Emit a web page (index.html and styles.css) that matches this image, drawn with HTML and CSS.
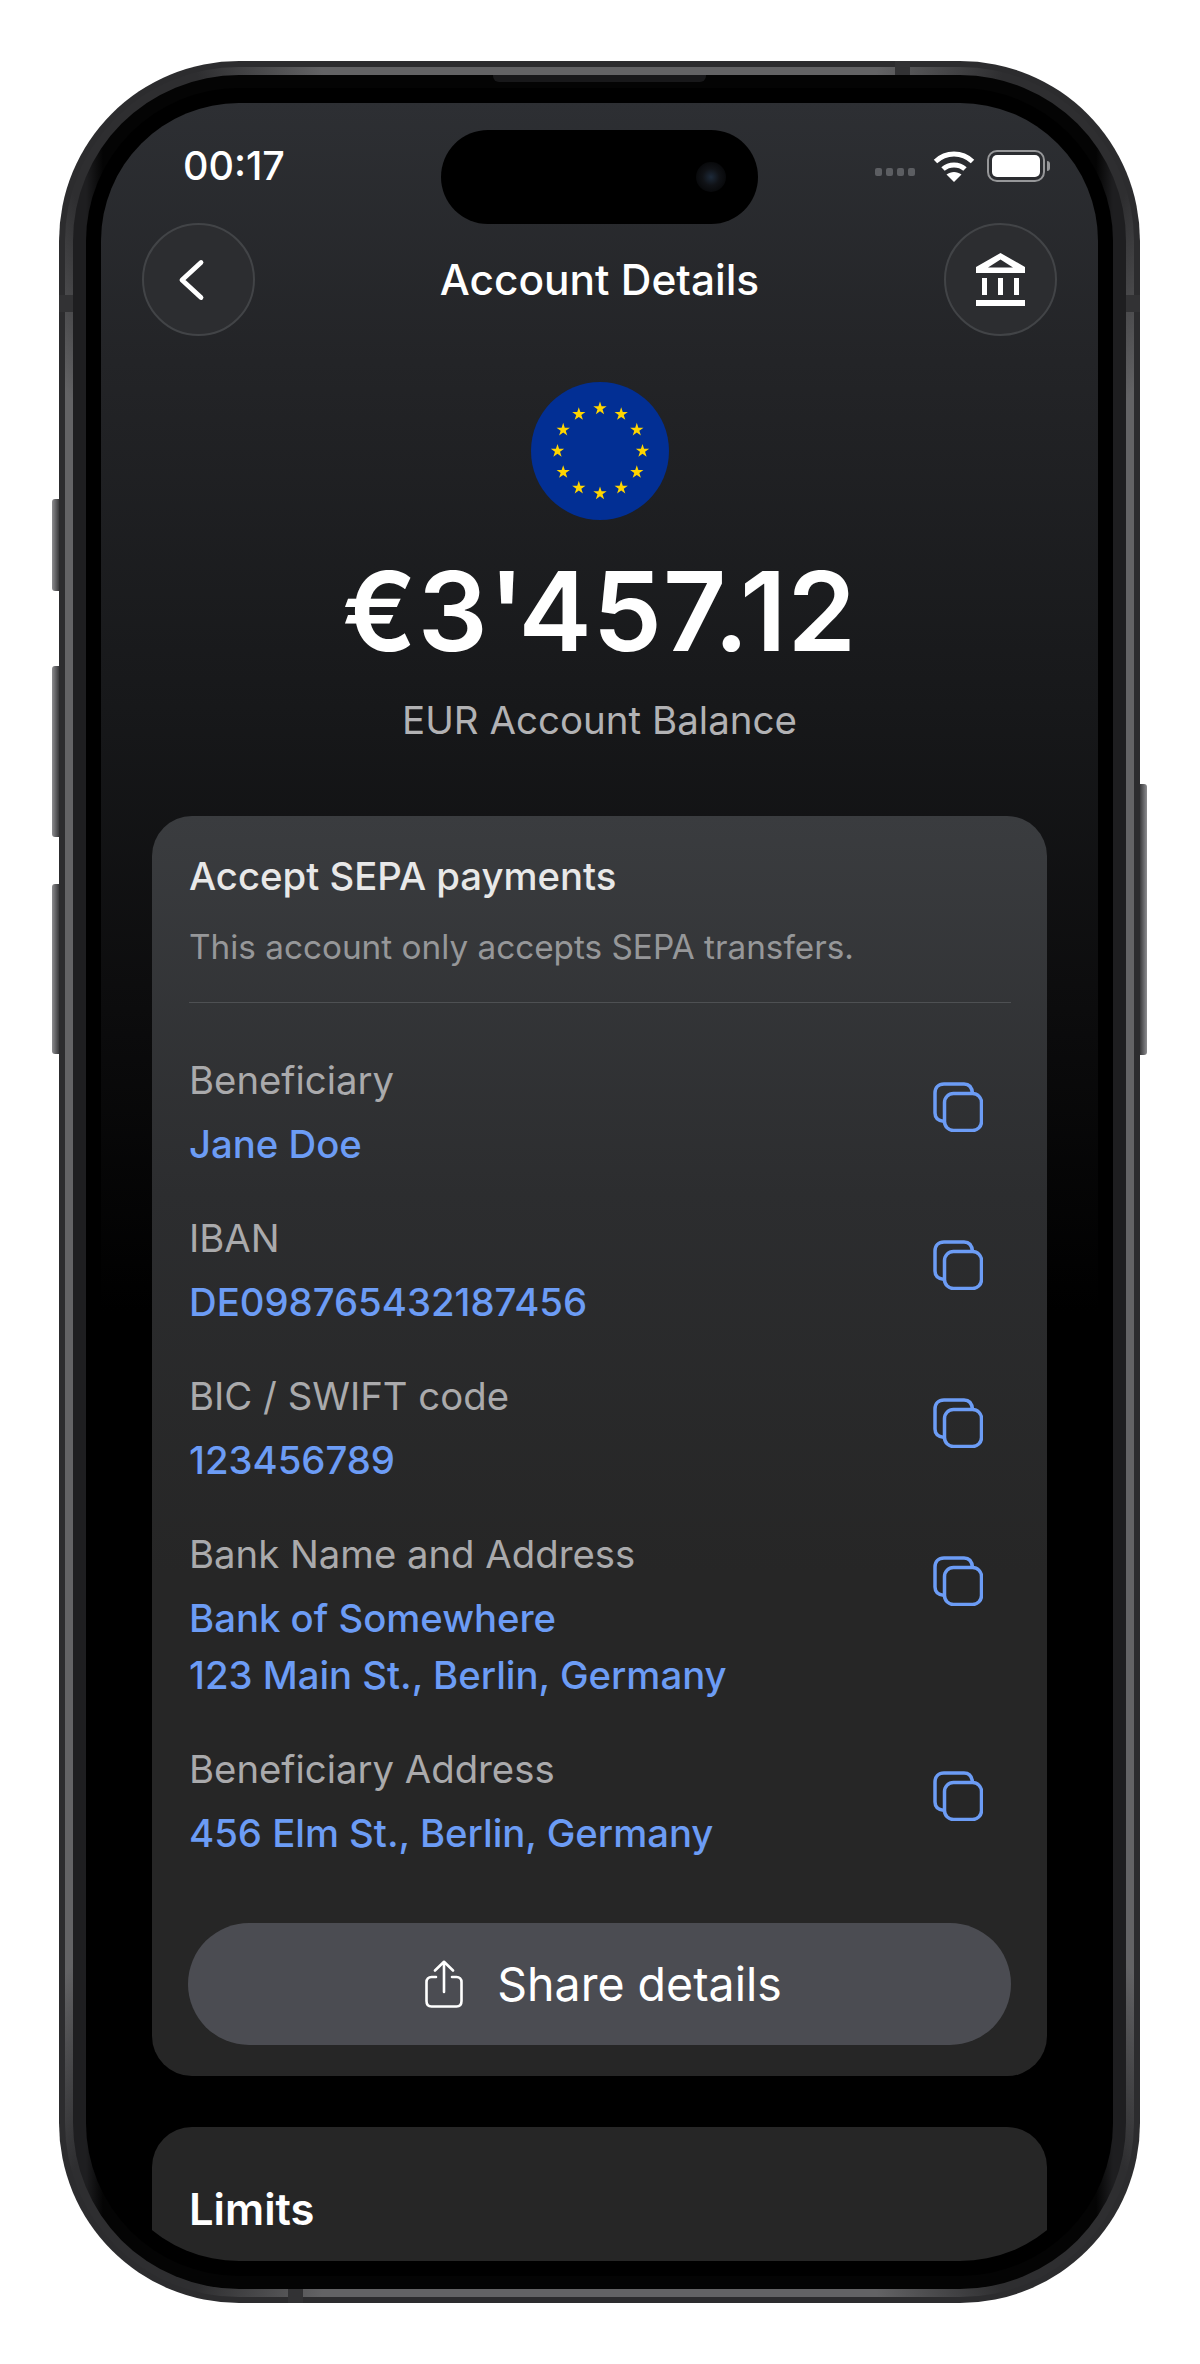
FILE: index.html
```html
<!DOCTYPE html>
<html lang="en">
<head>
    <meta charset="UTF-8">
    <title>Account Details</title>
    <link rel="stylesheet" href="styles.css">
</head>
<body>

<div class="device">
    <span class="side-btn btn-action"></span>
    <span class="side-btn btn-up"></span>
    <span class="side-btn btn-down"></span>
    <span class="side-btn btn-power"></span>

    <div class="rim">
        <div class="bezel">
            <span class="speaker"></span>
            <div class="black-edge">
                <div class="screen">
                    <div class="island">
                        <span class="lens"></span>
                    </div>

                    <div class="status">
                        <span class="time">00:17</span>
                        <div class="status-icons">
                            <div class="signal"><i></i><i></i><i></i><i></i></div>
                            <svg class="wifi" width="42" height="34" viewBox="0 0 42 34">
                                <path d="M2.500 12.500C13 2.500 29 2.500 39.500 12.500" fill="none" stroke="#fff" stroke-width="5"/>
                                <path d="M10 20C16 14.500 26 14.500 32 20" fill="none" stroke="#fff" stroke-width="5"/>
                                <path d="M21 33 13.500 25.500C18 22 24 22 28.500 25.500Z" fill="#fff"/>
                            </svg>
                            <div class="battery">
                                <div class="battery-body"><div class="battery-fill"></div></div>
                                <span class="battery-nub"></span>
                            </div>
                        </div>
                    </div>

                    <div class="nav">
                        <div class="round-btn">
                            <svg class="back-icon" width="28" height="42" viewBox="0 0 28 42">
                                <path d="M24 3.500 5 21 24 38.500" fill="none" stroke="#fff" stroke-width="4.800" stroke-linecap="round" stroke-linejoin="round"/>
                            </svg>
                        </div>
                        <h1 class="nav-title">Account Details</h1>
                        <div class="round-btn">
                            <svg width="49" height="53" viewBox="0 0 49 53">
                                <path d="M24.500 0 49 14V20H0V14ZM24.500 6.500 12 14.500H37Z" fill="#fff" fill-rule="evenodd"/>
                                <rect x="6" y="25" width="5" height="17" fill="#fff"/>
                                <rect x="22" y="25" width="5" height="17" fill="#fff"/>
                                <rect x="38" y="25" width="5" height="17" fill="#fff"/>
                                <rect x="0" y="47" width="49" height="6" fill="#fff"/>
                            </svg>
                        </div>
                    </div>

                    <div class="balance">
                        <svg class="flag" width="138" height="138" viewBox="-69 -69 138 138">
                            <defs>
                                <polygon id="star" points="0,-7 1.570,-2.160 6.660,-2.160 2.540,0.830 4.110,5.660 0,2.700 -4.110,5.660 -2.540,0.830 -6.660,-2.160 -1.570,-2.160" fill="#ffd500"/>
                            </defs>
                            <circle r="69" fill="#022f94"/>
                            <use href="#star" x="0" y="-42.500"/>
                            <use href="#star" x="21.200" y="-36.800"/>
                            <use href="#star" x="36.800" y="-21.200"/>
                            <use href="#star" x="42.500" y="0"/>
                            <use href="#star" x="36.800" y="21.200"/>
                            <use href="#star" x="21.200" y="36.800"/>
                            <use href="#star" x="0" y="42.500"/>
                            <use href="#star" x="-21.200" y="36.800"/>
                            <use href="#star" x="-36.800" y="21.200"/>
                            <use href="#star" x="-42.500" y="0"/>
                            <use href="#star" x="-36.800" y="-21.200"/>
                            <use href="#star" x="-21.200" y="-36.800"/>
                        </svg>
                        <div class="amount">€3'457.12</div>
                        <div class="amount-label">EUR Account Balance</div>
                    </div>

                    <div class="card details-card">
                        <h2 class="card-title">Accept SEPA payments</h2>
                        <p class="card-sub">This account only accepts SEPA transfers.</p>
                        <div class="divider"></div>

                        <div class="rows">
                            <div class="row">
                                <div>
                                    <div class="row-label">Beneficiary</div>
                                    <div class="row-value">Jane Doe</div>
                                </div>
                                <svg class="copy" width="50" height="50" viewBox="0 0 50 50"><use href="#copy-icon"/></svg>
                            </div>
                            <div class="row">
                                <div>
                                    <div class="row-label">IBAN</div>
                                    <div class="row-value">DE098765432187456</div>
                                </div>
                                <svg class="copy" width="50" height="50" viewBox="0 0 50 50"><use href="#copy-icon"/></svg>
                            </div>
                            <div class="row">
                                <div>
                                    <div class="row-label">BIC / SWIFT code</div>
                                    <div class="row-value">123456789</div>
                                </div>
                                <svg class="copy" width="50" height="50" viewBox="0 0 50 50"><use href="#copy-icon"/></svg>
                            </div>
                            <div class="row">
                                <div>
                                    <div class="row-label">Bank Name and Address</div>
                                    <div class="row-value">Bank of Somewhere<br>123 Main St., Berlin, Germany</div>
                                </div>
                                <svg class="copy" width="50" height="50" viewBox="0 0 50 50"><use href="#copy-icon"/></svg>
                            </div>
                            <div class="row">
                                <div>
                                    <div class="row-label">Beneficiary Address</div>
                                    <div class="row-value">456 Elm St., Berlin, Germany</div>
                                </div>
                                <svg class="copy" width="50" height="50" viewBox="0 0 50 50"><use href="#copy-icon"/></svg>
                            </div>
                        </div>

                        <div class="share-btn">
                            <svg width="38" height="48" viewBox="0 0 38 48">
                                <path d="M11 17H6.500C3.500 17 1.500 19 1.500 22V41C1.500 44.500 3.500 46.500 6.500 46.500H31.500C34.500 46.500 36.500 44.500 36.500 41V22C36.500 19 34.500 17 31.500 17H27" fill="none" stroke="#fff" stroke-width="2.600" stroke-linecap="round"/>
                                <path d="M19 32V2M10 10.500 19 1.800 28 10.500" fill="none" stroke="#fff" stroke-width="2.600" stroke-linecap="round" stroke-linejoin="round"/>
                            </svg>
                            <span>Share details</span>
                        </div>
                    </div>

                    <div class="card limits-card">
                        <h2 class="limits-title">Limits</h2>
                    </div>
                </div>
            </div>
        </div>
    </div>

    <span class="band band-top"></span>
    <span class="band band-left"></span>
    <span class="band band-right"></span>
    <span class="band band-bottom"></span>
</div>

<svg class="sprites" width="0" height="0">
    <defs>
        <g id="copy-icon" fill="none" stroke="#6c9cf5" stroke-width="3.500">
            <path d="M11.500 39.500C5.500 39 2 36 2 31V11C2 5.500 5.500 2 11 2H31C36 2 39 5 39.500 11.500"/>
            <rect x="11.500" y="11.500" width="37" height="37" rx="9"/>
        </g>
    </defs>
</svg>

</body>
</html>
```

FILE: styles.css
```css
* {
    box-sizing: border-box;
}

body {
    margin: 0;
    padding: 61px 0 0 59px;
    height: 2364px;
    overflow: hidden;
    background-color: rgb(255, 255, 255);
    font-family: Inter, "Liberation Sans", sans-serif;
    color: rgb(255, 255, 255);
}

/* phone frame */
.device {
    position: relative;
    width: 1081px;
    height: 2242px;
    padding: 6px;
    border-radius: 180px;
    background-color: rgb(44, 44, 46);
}

.rim {
    height: 100%;
    padding: 8px;
    border-radius: 174px;
    background: conic-gradient(#636365 0 14deg, #2e2e30 20deg 28deg, #636365 34deg 146deg, #2e2e30 152deg 160deg, #636365 166deg 194deg, #2e2e30 200deg 208deg, #636365 214deg 326deg, #2e2e30 332deg 340deg, #636365 346deg);
}

.bezel {
    position: relative;
    height: 100%;
    padding: 13px;
    border-radius: 166px;
    background: linear-gradient(90deg, #1e1e20 0, #1e1e20 13px, #040404 30px, #040404 calc(100% - 30px), #1e1e20 calc(100% - 13px));
}

.black-edge {
    height: 100%;
    padding: 15px;
    border-radius: 153px;
    background-color: rgb(0, 0, 0);
}

.speaker {
    position: absolute;
    top: 0;
    left: 420px;
    width: 213px;
    height: 7px;
    border-radius: 0 0 6px 6px;
    background-color: rgb(24, 24, 26);
}

.side-btn {
    position: absolute;
    left: -7px;
    width: 7px;
    border-radius: 3px 0 0 3px;
    background: linear-gradient(90deg, #8d8d90, #3a3a3c);
}

.btn-action { top: 438px; height: 92px; }
.btn-up { top: 605px; height: 171px; }
.btn-down { top: 823px; height: 170px; }

.btn-power {
    top: 723px;
    left: auto;
    right: -7px;
    height: 271px;
    border-radius: 0 3px 3px 0;
    background: linear-gradient(270deg, #8d8d90, #3a3a3c);
}

.band {
    position: absolute;
    background-color: rgb(50, 50, 52);
}

.band-top { top: 0; left: 836px; width: 15px; height: 14px; }
.band-left { top: 234px; left: 0; width: 14px; height: 17px; }
.band-right { top: 234px; right: 0; width: 14px; height: 17px; }
.band-bottom { bottom: 0; left: 229px; width: 15px; height: 14px; }

/* screen */
.screen {
    position: relative;
    height: 100%;
    overflow: hidden;
    border-radius: 138px;
    background: linear-gradient(180deg, #2d2f33 0, #232427 12%, #17181a 28%, #0c0c0d 42%, #000 56%);
}

.island {
    position: absolute;
    top: 27px;
    left: 340px;
    width: 317px;
    height: 94px;
    border-radius: 47px;
    background-color: rgb(0, 0, 0);
}

.lens {
    position: absolute;
    top: 32px;
    right: 32px;
    width: 30px;
    height: 30px;
    border-radius: 50%;
    background: radial-gradient(circle, #1d2a3a 0, #101216 40%, #08090b 70%, #050506 100%);
}

.status {
    display: flex;
    justify-content: space-between;
    align-items: center;
    padding: 38px 48px 0 82px;
    height: 88px;
}

.time {
    font-size: 39.500px;
    font-weight: 500;
    line-height: 50px;
}

.status-icons {
    display: flex;
    align-items: center;
    height: 50px;
}

.signal {
    display: flex;
    gap: 4px;
    margin-top: 12px;
    margin-right: 18px;
}

.signal i {
    width: 7px;
    height: 8px;
    border-radius: 2px;
    background-color: rgb(92, 94, 98);
}

.wifi {
    margin-right: 12px;
}

.battery {
    display: flex;
    align-items: center;
}

.battery-body {
    width: 58px;
    height: 32px;
    padding: 3px;
    border: 2.500px solid rgb(150, 151, 153);
    border-radius: 10px;
}

.battery-fill {
    height: 100%;
    border-radius: 5px;
    background-color: rgb(255, 255, 255);
}

.battery-nub {
    width: 3px;
    height: 10px;
    margin-left: 2px;
    border-radius: 0 3px 3px 0;
    background-color: rgb(150, 151, 153);
}

.nav {
    display: flex;
    justify-content: space-between;
    align-items: center;
    margin-top: 32px;
    padding: 0 41px;
}

.round-btn {
    display: flex;
    justify-content: center;
    align-items: center;
    width: 113px;
    height: 113px;
    border: 2px solid rgb(66, 68, 71);
    border-radius: 50%;
    background-color: rgb(44, 45, 48);
}

.back-icon {
    margin-right: 16px;
}

.nav-title {
    margin: 0;
    font-size: 42.400px;
    font-weight: 500;
    line-height: 50px;
}

.balance {
    display: flex;
    flex-direction: column;
    align-items: center;
    margin-top: 46px;
}

.amount {
    margin-top: 31px;
    font-size: 110px;
    font-weight: 600;
    line-height: 120px;
    letter-spacing: 1px;
}

.amount-label {
    margin-top: 27px;
    font-size: 38.500px;
    line-height: 44px;
    color: rgb(178, 178, 180);
}

/* cards */
.card {
    margin: 0 51px;
    border-radius: 40px;
    background-color: rgb(38, 38, 38);
}

.details-card {
    margin-top: 74px;
    padding: 38px 36px 31px 37px;
    background: linear-gradient(180deg, #3a3c3f 0, #2c2d2f 30%, #262626 60%);
}

.card-title {
    margin: 0;
    font-size: 38.300px;
    font-weight: 500;
    line-height: 44px;
    color: rgb(232, 232, 232);
}

.card-sub {
    margin: 27px 0 0;
    font-size: 33.300px;
    line-height: 44px;
    color: rgb(150, 151, 153);
}

.divider {
    height: 1px;
    margin-top: 33px;
    background-color: rgb(78, 80, 83);
}

.rows {
    display: flex;
    flex-direction: column;
    gap: 42px;
    margin-top: 54px;
}

.row {
    display: flex;
    justify-content: space-between;
    align-items: flex-start;
}

.row-label {
    font-size: 38.300px;
    line-height: 46px;
    color: rgb(170, 170, 172);
}

.row-value {
    margin-top: 13px;
    font-size: 38.300px;
    font-weight: 500;
    line-height: 57px;
    color: rgb(108, 156, 245);
}

.copy {
    flex-shrink: 0;
    margin-top: 25px;
    margin-right: 28px;
}

.share-btn {
    display: flex;
    justify-content: center;
    align-items: center;
    gap: 34px;
    height: 122px;
    margin-top: 61px;
    margin-left: -1px;
    padding-left: 8px;
    border-radius: 61px;
    background-color: rgb(75, 76, 82);
    font-size: 46.500px;
    font-weight: 400;
}

.limits-card {
    height: 200px;
    margin-top: 51px;
    padding: 57px 37px 0;
}

.limits-title {
    margin: 0;
    font-size: 43.500px;
    font-weight: 600;
    line-height: 50px;
}

.sprites {
    position: absolute;
}
```
